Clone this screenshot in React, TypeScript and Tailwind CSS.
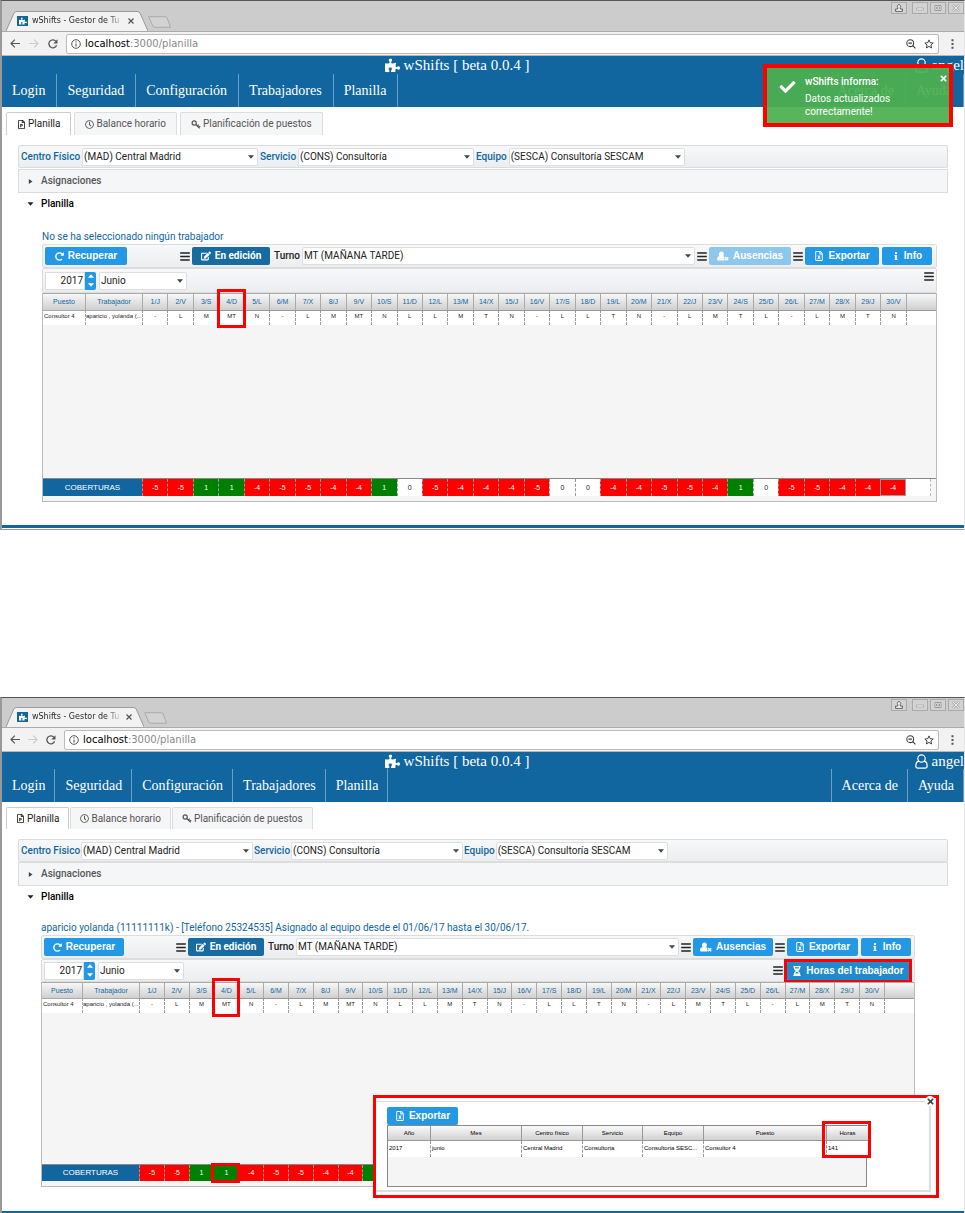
import React from "react";
import {
  FaBars, FaCheck, FaEdit, FaHourglassHalf, FaInfo, FaPuzzlePiece, FaRedoAlt,
  FaRegClock, FaRegFileExcel, FaRegFilePowerpoint, FaTimes,
} from "react-icons/fa";

type Variant = "first" | "second";

const letters = ["J", "V", "S", "D", "L", "M", "X"];
const shifts = "- L M MT N - L M MT N L L M T N - L L T N - L M T L - L M T N".split(" ");
const coverage = [-5, -5, 1, 1, -4, -5, -5, -4, -4, 1, 0, -5, -4, -4, -4, -5, 0, 0, -4, -4, -5, -5, -4, 1, 0, -5, -5, -4, -4, -4];
const days = shifts.map((_, i) => `${i + 1}/${letters[i % 7]}`);

const styles = {
  first: {
    strip: "h-[30px]", tab: "w-[142px]", tabTitle: "w-[92px]", title: "h-[18px]", tabs: "h-[23px] gap-[3px]", tabPad: "px-[10px]",
    gap: "h-px", msg: "mt-[14px]", select: "w-[176px]", labelGap: "gap-[2px]", inner: "ml-10 mr-[27px]",
    bar2: "h-[25px]", recup: "w-[82px]", edit: "w-[78px]", exp: "w-[74px]", spacer: "w-[51px]",
    month: "w-[88px]", head: "h-[17px]", empty: "h-[153px]", cov: "h-[17px]", rest: "h-[5px]", end: "h-[23px]",
    foot: "h-[3px]", c1: "w-[42px]", c2: "w-[57px]", urlGap: "gap-[9px]", covLabel: "w-[99px]", nav: "pl-[10px] pr-[11px]",
  },
  second: {
    strip: "h-[29px]", tab: "w-[138px]", tabTitle: "w-[90px]", title: "h-[17px]", tabs: "h-[22px] gap-px", tabPad: "px-[9px]",
    gap: "h-0", msg: "mt-[12px]", select: "w-[172px]", labelGap: "gap-px", inner: "ml-[39px] mr-[49px]",
    bar2: "h-[23px]", recup: "w-20", edit: "w-[76px]", exp: "w-[71px]", spacer: "w-[50px]",
    month: "w-[86px]", head: "h-4", empty: "h-[151px]", cov: "h-4", rest: "h-[5px]", end: "h-6",
    foot: "h-[2px]", c1: "w-[40px]", c2: "w-[57px]", urlGap: "gap-[8px]", covLabel: "w-[97px]", nav: "pl-[10px] pr-[9px]",
  },
};

function Select({ id, value, width, label }: { id: string; value: string; width: string; label?: string }) {
  return (
    <span className={`relative flex h-[18px] min-w-0 ${width}`}>
      <select id={id} aria-label={label} className="w-full appearance-none rounded-[2px] border border-[#dcdee0] bg-white pl-px text-[10px] font-normal leading-4 text-[#222]">
        <option>{value}</option>
      </select>
      <svg className="pointer-events-none absolute right-[4px] top-[7px] h-1 w-[6px]" viewBox="0 0 6 4"><path d="M0 0.3h6L3 3.8z" fill="#444" /></svg>
    </span>
  );
}

function Button({ icon, children, className = "" }: { icon: React.ReactNode; children: React.ReactNode; className?: string }) {
  return (
    <button className={`flex h-[18px] shrink-0 items-center justify-center gap-1 rounded-[2px] font-['Liberation_Sans',sans-serif] text-[10px] font-bold leading-[18px] text-white ${className}`}>
      {icon}
      {children}
    </button>
  );
}

const Bars = () => <FaBars className="h-[11px] w-[10px] shrink-0 text-[#222]" />;

const UserRemoved = () => (
  <svg className="h-[10px] w-[12px]" viewBox="0 0 12 10" aria-hidden="true">
    <path d="M4.300 .5a2.500 2.600 0 0 1 2.200 4c-.2.400-.4.600-.6.800.9.100 1.500.4 1.900.9l-.9 1.100 1 1-.8 1.200H1.500C.5 9.500 0 9 0 8.200 0 6.300.9 5.300 2.700 5.300A2.800 2.800 0 0 1 4.300 .5z" fill="currentColor" />
    <path d="M8.200 6.300l3 3M11.200 6.300l-3 3" stroke="currentColor" strokeWidth="1.400" />
  </svg>
);

const Keys = () => (
  <svg className="h-[9px] w-[10px]" viewBox="0 0 10 9" aria-hidden="true">
    <circle cx="3.200" cy="3" r="2.100" fill="none" stroke="currentColor" strokeWidth="1.200" />
    <path d="M4.700 4.500L8.800 8.300M6.300 6l1.400-1.400M7.900 7.400l1.300-1.300" fill="none" stroke="currentColor" strokeWidth="1.200" />
  </svg>
);

function Browser({ variant, children }: { variant: Variant; children: React.ReactNode }) {
  const s = styles[variant];
  const ctl = "flex h-3 w-4 items-center justify-center border border-[#aaa] bg-[#d2d2d2] text-[#888]";
  return (
    <section className="relative border-l-2 border-t border-l-[#999] border-t-[#555] border-r border-r-[#e4e4e4] bg-white">
      <div className={`flex items-end bg-[#ccc] ${s.strip}`}>
        <div className={`relative ml-[4px] flex h-5 shrink-0 items-center pl-[11px] ${s.tab}`}>
          <svg className="absolute inset-0 h-full w-full" viewBox="0 0 142 20" preserveAspectRatio="none">
            <path d="M0 20L8 2Q9 .5 11 .5H131Q133 .5 134 2L142 20" fill="#f2f2f2" stroke="#999" />
          </svg>
          <span className="relative flex h-[10px] w-[11px] shrink-0 items-center justify-center bg-[#11669f] text-white"><FaPuzzlePiece size={8} /></span>
          <span className={`relative ml-[4px] overflow-hidden whitespace-nowrap bg-[linear-gradient(90deg,#222_82%,#f2f2f2)] bg-clip-text font-['DejaVu_Sans',sans-serif] text-[8px] leading-[18px] text-transparent ${s.tabTitle}`}>wShifts - Gestor de Tu</span>
          <button aria-label="Cerrar pestaña" className="relative ml-[4px] shrink-0 text-[#555]">
            <svg className="h-[6px] w-[6px]" viewBox="0 0 6 6"><path d="M.5 .5l5 5M5.500 .5l-5 5" stroke="currentColor" strokeWidth="1.2" /></svg>
          </button>
        </div>
        <svg className="mb-[3px] h-3 w-[23px] shrink-0" viewBox="0 0 23 12"><path d="M.7 .7H17Q18.5 .7 19.2 2L22.5 11.3H7Q5.5 11.3 4.8 10Z" fill="#d2d2d2" stroke="#aaa" /></svg>
        <div className="ml-auto flex gap-[2px] self-start pt-[1px]">
          <button aria-label="Perfil" className={`${ctl} mr-[3px]`}>
            <svg className="h-2 w-2" viewBox="0 0 8 8"><path d="M4 .6a1.8 1.8 0 0 1 1.2 3V5H7.400v2.400H.6V5H2.800V3.6A1.8 1.8 0 0 1 4 .6z" fill="#f4f4f4" stroke="#555" strokeWidth=".9" /></svg>
          </button>
          <button aria-label="Minimizar" className={ctl}><svg className="h-2 w-2" viewBox="0 0 8 8"><path d="M.5 4h7v2h-7z" fill="#eee" stroke="#999" strokeWidth=".6" /></svg></button>
          <button aria-label="Maximizar" className={ctl}><svg className="h-2 w-2" viewBox="0 0 8 8"><path d="M1 1.5h6v5H1zM2.5 3h3v2h-3z" fill="#eee" stroke="#888" strokeWidth=".8" /></svg></button>
          <button aria-label="Cerrar" className={ctl}><svg className="h-2 w-2" viewBox="0 0 8 8"><path d="M1 1l6 6M7 1L1 7" stroke="#888" strokeWidth="2.4" /><path d="M1 1l6 6M7 1L1 7" stroke="#eee" strokeWidth="1.1" /></svg></button>
        </div>
      </div>
      <div className="flex h-[25px] items-center border-b border-t border-b-[#b8b8b8] border-t-[#aaa] bg-[#f2f2f2] pl-2 pr-[10px]">
        <div className={`flex shrink-0 items-center text-[#555] ${s.urlGap}`}>
          <svg className="h-[9px] w-[10px]" viewBox="0 0 10 9"><path d="M10 4.5H1M4.8 .7L1 4.5l3.8 3.8" fill="none" stroke="currentColor" strokeWidth="1.2" /></svg>
          <svg className="h-[9px] w-[10px] text-[#ccc]" viewBox="0 0 10 9"><path d="M0 4.5h9M5.2 .7L9 4.5 5.2 8.3" fill="none" stroke="currentColor" strokeWidth="1.2" /></svg>
          <svg className="h-[10px] w-[10px]" viewBox="0 0 10 10"><path d="M8.6 6.3A4 4 0 1 1 8 2.3" fill="none" stroke="currentColor" strokeWidth="1.3" /><path d="M9.5 .2v4.2H5.3z" fill="currentColor" /></svg>
        </div>
        <div className="ml-2 flex h-5 min-w-0 flex-1 items-center rounded-[2px] border border-[#bbb] bg-white px-1">
          <svg className="h-[10px] w-[10px] shrink-0" viewBox="0 0 10 10"><circle cx="5" cy="5" r="4.3" fill="none" stroke="#555" /><path d="M5 4.4v3.1M5 2.3v1.2" stroke="#555" strokeWidth="1.1" /></svg>
          <span className="ml-1 flex-1 font-['DejaVu_Sans',sans-serif] text-[10px] leading-4 text-[#888]"><span className="text-black">localhost</span>:3000/planilla</span>
          <svg className="h-[10px] w-[10px] shrink-0" viewBox="0 0 10 10"><circle cx="4.2" cy="4.2" r="3.4" fill="none" stroke="#444" strokeWidth="1.1" /><path d="M2.4 4.2h3.6M6.7 6.7l2.7 2.7" stroke="#444" strokeWidth="1.2" /></svg>
          <svg className="ml-2 h-[10px] w-[10px] shrink-0" viewBox="0 0 10 10"><path d="M5 .9l1.2 2.8 3 .3-2.3 2 .7 3L5 7.4 2.4 9l.7-3L.8 4l3-.3z" fill="none" stroke="#444" /></svg>
        </div>
        <svg className="ml-3 h-[10px] w-[3px] shrink-0" viewBox="0 0 3 10"><path d="M.5 .2h2v2h-2zM.5 4h2v2h-2zM.5 7.8h2v2h-2z" fill="#555" /></svg>
      </div>
      {children}
    </section>
  );
}

function Header({ variant }: { variant: Variant }) {
  const s = styles[variant];
  return (
    <header className="bg-[#11669f] font-['Liberation_Serif',serif] text-white">
      <div className={`grid grid-cols-[1fr_auto_1fr] items-center text-[15px] leading-[18px] ${s.title}`}>
        <span />
        <h1 className="flex items-center gap-1 pr-[52px]"><FaPuzzlePiece size={15} />wShifts [ beta 0.0.4 ]</h1>
        <span className="flex items-center justify-end gap-[4px]">
          <svg className="h-[15px] w-[13px]" viewBox="0 0 13 15"><path d="M4 7.2C2 7.4 .8 9 .8 12c0 1.4.9 2.2 2.2 2.2h7c1.300 0 2.200-.8 2.200-2.200 0-3-1.200-4.600-3.200-4.800" fill="none" stroke="white" strokeWidth="1.2" /><circle cx="6.500" cy="4.500" r="3.700" fill="none" stroke="white" strokeWidth="1.200" /></svg>
          angel
        </span>
      </div>
      <nav className="flex h-[33px] text-[14px] leading-[33px]">
        {["Login", "Seguridad", "Configuración", "Trabajadores", "Planilla"].map((t) => (
          <a key={t} href="#" className={`border-r border-[#6ba0c4] ${s.nav}`}>{t}</a>
        ))}
        <span className="flex-1" />
        <a href="#" className={`border-l border-[#6ba0c4] ${s.nav}`}>Acerca de</a>
        <a href="#" className={`border-x border-[#6ba0c4] ${s.nav}`}>Ayuda</a>
      </nav>
    </header>
  );
}

function Roster({ variant }: { variant: Variant }) {
  const s = styles[variant];
  const th = `relative border-l border-t border-[#aaa] p-0 text-center font-normal ${s.head}`;
  return (
    <div className="border-x border-b border-[#bbb] bg-[#f5f5f5] font-['Liberation_Sans',sans-serif]">
      <table className="w-full table-fixed border-separate border-spacing-0 text-[7px] leading-[8px]">
        <colgroup>
          <col className={s.c1} /><col className={s.c2} />
          {days.map((d) => <col key={d} />)}
          <col className="w-[30px]" />
        </colgroup>
        <thead className="text-[#11669f]">
          <tr className="bg-linear-to-b from-[#fafafa] to-[#cfcfcf]">
            <th className={`${th} border-l-0`}>Puesto</th>
            <th className={th}>Trabajador</th>
            {days.map((d, i) => (
              <th key={d} className={th}>
                {d}
                {i === 3 && <span className="pointer-events-none absolute -left-[2px] -right-[2px] -top-[5px] z-10 h-[39px] border-3 border-[#f00]" />}
              </th>
            ))}
            <th className={th} aria-label="Vacío" />
          </tr>
        </thead>
        <tbody>
          <tr className="bg-white text-[6px] text-[#222]">
            <td className="h-[15px] whitespace-nowrap border-t border-[#aaa] p-0 pb-1 pl-[1px]">Consultor 4</td>
            <td className="whitespace-nowrap border-l border-t border-dashed border-[#aaa] p-0 pb-1 [border-top-style:solid]">aparicio , yolanda (...</td>
            {shifts.map((v, i) => (
              <td key={i} className="border-l border-t border-dashed border-[#999] p-0 pb-1 text-center [border-top-style:solid]">{v}</td>
            ))}
            <td className="border-l border-t border-dashed border-[#999] p-0 [border-top-style:solid]" />
          </tr>
        </tbody>
      </table>
      <div className={s.empty} />
      <table className="w-full table-fixed border-separate border-spacing-0 border-t border-[#888] text-[7px] leading-[8px]">
        <colgroup>
          <col className={s.covLabel} />
          {days.map((d) => <col key={d} />)}
          <col className="w-[25px]" /><col className="w-[5px]" />
        </colgroup>
        <tbody>
          <tr className={`text-white ${s.cov}`}>
            <th className="bg-[#11669f] p-0 text-[8px] font-normal">COBERTURAS</th>
            {coverage.map((v, i) => (
              <td
                key={i}
                className={`relative border-l border-dashed border-[#999] p-0 text-center ${v < 0 ? "bg-[#f00]" : v > 0 ? "bg-[#008000]" : "bg-white text-[#222]"} ${i === 29 ? "border-y border-r [border-style:solid]" : ""}`}
              >
                {v}
                {variant === "second" && i === 3 && <span className="absolute -bottom-[2px] -left-[3px] -right-[2px] -top-[2px] z-10 border-3 border-[#f00]" />}
              </td>
            ))}
            <td className="border-r border-dashed border-[#bbb] bg-white p-0" />
            <td className="p-0" />
          </tr>
        </tbody>
      </table>
      <div className={s.rest} />
    </div>
  );
}

function Planner({ variant }: { variant: Variant }) {
  const s = styles[variant];
  const second = variant === "second";
  const tab = `flex h-full items-center gap-[2px] rounded-t-[2px] border border-b-0 ${s.tabPad}`;
  const bar = "flex items-center rounded-[2px] border border-[#dcdcdc] bg-linear-to-b from-[#f7f8f9] to-[#ebedf0]";
  return (
    <main className="font-['Roboto',sans-serif] text-[10px] leading-[14px] text-[#222]">
      <div className={`mt-[5px] flex pl-1 text-[#555] ${s.tabs}`}>
        <button className={`${tab} border-[#ccc] bg-white text-[#222]`}><FaRegFilePowerpoint size={9} />Planilla</button>
        <button className={`${tab} border-[#ddd] bg-[#f5f6f8]`}><FaRegClock size={9} />Balance horario</button>
        <button className={`${tab} border-[#ddd] bg-[#f5f6f8]`}><Keys />Planificación de puestos</button>
      </div>
      <div className="ml-4 mr-4 pt-[10px]">
        <div className={`h-[23px] pl-[2px] font-medium text-[#11669f] ${s.labelGap} ${bar}`}>
          <label htmlFor={`${variant}-centro`}>Centro Físico</label>
          <Select id={`${variant}-centro`} value="(MAD) Central Madrid" width={s.select} />
          <label htmlFor={`${variant}-servicio`}>Servicio</label>
          <Select id={`${variant}-servicio`} value="(CONS) Consultoría" width={s.select} />
          <label htmlFor={`${variant}-equipo`}>Equipo</label>
          <Select id={`${variant}-equipo`} value="(SESCA) Consultoría SESCAM" width={s.select} />
        </div>
        <div className={s.gap} />
        <button className="flex h-6 w-full items-center gap-2 border border-[#dcdcdc] bg-[#f5f6f8] pl-[9px] font-medium text-[#555]">
          <svg className="h-[5px] w-[5px]" viewBox="0 0 5 5"><path d="M.8 0L4.500 2.500 .8 5z" fill="#444" /></svg>Asignaciones
        </button>
        <button className="flex h-[22px] w-full items-center gap-[7px] pl-[9px] font-medium text-black">
          <svg className="h-1 w-[7px]" viewBox="0 0 7 4"><path d="M.5 .3h6L3.500 3.700z" fill="#222" /></svg>Planilla
        </button>
      </div>
      <div className={s.inner}>
        <p className={`h-[15px] whitespace-nowrap leading-[15px] text-[#11669f] ${s.msg}`}>
          {second ? "aparicio yolanda (11111111k) - [Teléfono 25324535] Asignado al equipo desde el 01/06/17 hasta el 30/06/17." : "No se ha seleccionado ningún trabajador"}
        </p>
        <div className={`h-6 gap-[2px] pl-[2px] ${second ? "pr-[3px]" : "pr-1"} ${bar}`}>
          <Button icon={<FaRedoAlt size={9} />} className={`bg-[#2399e5] ${s.recup}`}>Recuperar</Button>
          <span className={`-mr-[2px] ${s.spacer}`} />
          <Bars />
          <Button icon={<FaEdit size={10} />} className={`bg-[#186ba0] ${s.edit}`}>
            <span className="font-['Roboto',sans-serif]">En edición</span>
          </Button>
          <label htmlFor={`${variant}-turno`} className="ml-[2px] font-medium">Turno</label>
          <Select id={`${variant}-turno`} value="MT (MAÑANA TARDE)" width="flex-1" />
          <Bars />
          <Button icon={<UserRemoved />} className={`${second ? "bg-[#2399e5]" : "bg-[#8dc7ee]"} ${s.recup}`}>Ausencias</Button>
          <Bars />
          <Button icon={<FaRegFileExcel size={10} />} className={`bg-[#2399e5] ${s.exp}`}>Exportar</Button>
          <Button icon={<FaInfo size={8} />} className="ml-px w-[50px] bg-[#2399e5]">Info</Button>
        </div>
        <div className={`pl-[2px] ${second ? "pr-1" : "pr-[2px]"} ${s.bar2} ${bar}`}>
          <input aria-label="Año" defaultValue="2017" className="h-[18px] w-10 border border-[#ddd] bg-white pr-px text-right text-[10px]" />
          <span className="flex h-[18px] w-[11px] flex-col rounded-r-[2px] bg-[#2399e5]">
            <button aria-label="Más" className="flex flex-1 items-center justify-center"><svg className="h-[4px] w-[6px]" viewBox="0 0 6 4"><path d="M0 3.800h6L3 .3z" fill="white" /></svg></button>
            <button aria-label="Menos" className="flex flex-1 items-center justify-center"><svg className="h-[4px] w-[6px]" viewBox="0 0 6 4"><path d="M0 .2h6L3 3.700z" fill="white" /></svg></button>
          </span>
          <span className="w-[3px]" />
          <Select id={`${variant}-mes`} label="Mes" value="Junio" width={s.month} />
          <span className="flex-1" />
          {second ? (
            <>
              <Bars />
              <span className="relative ml-[3px] flex">
                <Button icon={<FaHourglassHalf size={10} />} className="w-[124px] bg-[#1f8ace]">Horas del trabajador</Button>
                <span className="pointer-events-none absolute -inset-x-[2px] -inset-y-[3px] border-3 border-[#f00]" />
              </span>
            </>
          ) : <span className="mb-2"><Bars /></span>}
        </div>
        <Roster variant={variant} />
      </div>
      <div className={s.end} />
      <div className={`bg-[#11669f] ${s.foot}`} />
    </main>
  );
}

function Toast() {
  return (
    <div role="status" className="absolute right-[11px] top-[63px] flex h-[63px] w-[190px] border-4 border-[#f00] bg-[#4caf50]/93 pl-3 pt-[8px] font-['Roboto',sans-serif] text-[10px] text-white">
      <FaCheck className="mt-[3px] h-4 w-[17px] shrink-0" />
      <div className="ml-[9px]">
        <h2 className="font-medium leading-[12px]">wShifts informa:</h2>
        <p className="mt-[4px] leading-[13px]">Datos actualizados<br />correctamente!</p>
      </div>
      <button aria-label="Cerrar aviso" className="absolute right-[1px] top-[6px]"><FaTimes size={9} /></button>
    </div>
  );
}

function HoursDialog() {
  const heads = ["Año", "Mes", "Centro físico", "Servicio", "Equipo", "Puesto", "Horas"];
  const cells = ["2017", "junio", "Central Madrid", "Consultoria", "Consultoria SESC...", "Consultor 4", "141"];
  const widths = ["w-[42px]", "w-[91px]", "w-[61px]", "w-[60px]", "w-[61px]", "w-[123px]", "w-[42px]"];
  return (
    <div role="dialog" aria-label="Horas del trabajador" className="absolute bottom-[15px] right-[25px] z-20 h-[103px] w-[566px] border-3 border-[#f00] bg-white">
      <div className="mr-[5px] mt-[3px] h-[91px] border-b-2 border-r-2 border-t border-[#ddd] pl-[11px] pt-[5px]">
        <Button icon={<FaRegFileExcel size={10} />} className="w-[71px] bg-[#2399e5]">Exportar</Button>
        <div className="h-[62px] w-[480px] border border-[#888] bg-[#f5f5f5]">
          <table className="w-full table-fixed border-separate border-spacing-0 font-['Liberation_Sans',sans-serif] text-[6px] leading-[8px] text-black">
            <colgroup>{widths.map((w, i) => <col key={i} className={w} />)}</colgroup>
            <thead>
              <tr className="bg-linear-to-b from-[#fafafa] to-[#cfcfcf]">
                {heads.map((h, i) => (
                  <th key={h} className={`relative h-[15px] border-b border-[#999] p-0 text-center font-normal ${i ? "border-l" : ""}`}>
                    {h}
                    {i === 6 && <span className="pointer-events-none absolute -left-[5px] -right-[3px] -top-[5px] h-[37px] border-3 border-[#f00]" />}
                  </th>
                ))}
              </tr>
            </thead>
            <tbody>
              <tr className="bg-white">
                {cells.map((c, i) => (
                  <td key={i} className={`h-4 whitespace-nowrap border-dashed border-[#999] p-0 pb-[2px] pl-px ${i ? "border-l" : ""}`}>{c}</td>
                ))}
              </tr>
            </tbody>
          </table>
        </div>
      </div>
      <button aria-label="Cerrar" className="absolute right-[1px] top-[-2px] flex h-[10px] w-[10px] items-center justify-center rounded-full bg-white text-[#444]"><FaTimes size={9} /></button>
    </div>
  );
}

export default function App() {
  return (
    <div className="flex flex-col gap-[167px] overflow-x-hidden bg-white">
      <Browser variant="first">
        <Header variant="first" />
        <Planner variant="first" />
        <div className="h-[2px] border-b border-[#999]" />
        <Toast />
      </Browser>
      <Browser variant="second">
        <Header variant="second" />
        <Planner variant="second" />
        <HoursDialog />
      </Browser>
    </div>
  );
}
